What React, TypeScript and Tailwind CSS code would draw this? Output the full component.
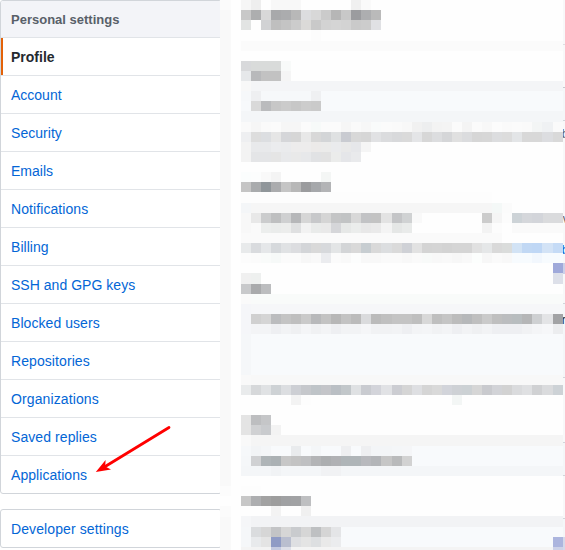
import React from "react";

const links = [
  { label: "Account", tracking: "" },
  { label: "Security", tracking: "tracking-[0.04px]" },
  { label: "Emails", tracking: "" },
  { label: "Notifications", tracking: "tracking-[0.08px]" },
  { label: "Billing", tracking: "tracking-[0.04px]" },
  { label: "SSH and GPG keys", tracking: "tracking-[0.03px]" },
  { label: "Blocked users", tracking: "tracking-[0.06px]" },
  { label: "Repositories", tracking: "tracking-[0.08px]" },
  { label: "Organizations", tracking: "tracking-[0.11px]" },
  { label: "Saved replies", tracking: "tracking-[0.08px]" },
  { label: "Applications", tracking: "tracking-[0.05px]" },
];

// Each row is a run list of 32 cells: a colour (two digits for a grey), with
// an optional *count. The last run extends to the end of the row.
const rows: string[] = [
  "f6 ee fe f8*3 fe*5 f0 fa fe",
  "c8 adaeaf d8 a8a9ab abacae b8 dcdddf d8 cb b6 c8 9b9c9f adaeb0 ba fe",
  "e2e4e3 fe d1d2d4 bf c4 cc dbdad8 c9 d3 d5 d3 ca cc e0e1e4 fe",
  "fe*7 fc fe",
  "fb",
  "fe",
  "d8d9db d9dbda*3 f8faf9 fe",
  "e6e8ea b8b9bb c2*2 f5 fe",
  "f8 f4f5f7",
  "f6f8fa eeeff1 f6f8fa*5 eff0f2 f8fafc",
  "f7f9fb d9 babbbd c7 cb c7 cc ca f8fafc",
  "f4f6f8",
  "fa f6 fa fb f6 f6 fb f7faf9 fb fb f6 fa f7 f9fbfb fb fa f8 f1 edeeef f3 f4 fb f4 fb f8 fc fa fb fa f3f5f5 eff1f3 fa",
  "eeeff1 dd dcdee1 e6 d5d6d9 d6 e8 d8 d3d5d7 dfe1e2 c9cbd1 d8 d6 e1e2e4 dbdcde d8d9db da e4e5e7 d7 dcdddf d5d6d8 e0 dbdcde d6 d7 dcdddf dc e3e5e7 d8 d8 dcdde0 d9",
  "f3 e8e9eb*2 ebecee eaebed edecec*2 eceae9 ebebea eaebed e9 e6e7ea f5 fe",
  "f3 e4e5e7*2 e5 e8e9eb e9 e7e8ea e1e2e4 e2 ebeceb e5e6e9 e9eaec fe",
  "fe",
  "fbfdfd fcfdfd f9 f4 fe*4 f4f6f5 fe",
  "c5 a9abad 90969a abacae c5 b8 9b9c9e a6a8ab b3b4b6 fe",
  "fd*25 fe",
  "f4f6f8 f6*24 f4f8f7 fb fe",
  "f8 e8 cbcccd bebfc0 cfd0d1 b6b7b9 d6 c7c8ca d5 c4c5c6 c1c3c4 d8 c2c3c5 c3 e3 c4c5c7 d0d2d3 f9 fe*6 cc f5 fc cdd3d7 d5d7db d3d5da dadbdd*2",
  "f8 fa eceeed eaeceb ecedec dfe0e1 f2 e9ebea e9 d5d6d9 e6e8e7 ebedec e8 ea f4 e5e7e6 e9ebea fe*7 f3 fc fe fa",
  "fa*26 fe",
  "e8eaeb d9dbde e5e7e9 d6d9dc e0e2e4 dcdde0 d3d5d8 d9 d7d9dc e3e5e6 d3d5d7 d9 c7cdd1 d9 dcdee0 da cfd1d6 e2 d4 d5 d3 d5 d5 e1 e5e7e8 d9 dadcdb d2e3f5 c1d8f4 bfd7f5 d3e3f6 c5dbf6",
  "fc fb f9fbfa f6f9f8 fb fb f7 f9 ebecef fb f9 fcfdfd f8 f8 fa fa f8 fa f8faf9 f8 f9 f7 f9 fcfefd f7 fa f8 f7fbfe*2 f2f7fd f7fbfe",
  "fe*31 9fa9da",
  "f0 eef0ef fe*29 dde0e9",
  "c8c9cb a9aaac bcbdbf fe",
  "fa f9fbfa",
  "f5f6f9 f6f7f9",
  "f5f6f9 d0 d5 bbbcbe c4 bf ca b8b9bb c3 b7 c3 bb dadbdd bb c0 c4 c4 bf d8 bf c5 bc b6b8ba bf ca bf bbbdbf b8bdbf b5b6b7 ced0d2 e3e4e6 a2a3a5",
  "f5f6f9 f3f4f6*2 eeeff2 f2f3f5 eff0f2 f4f5f7 f0f1f3 f3f4f6 eeeff2 f2f3f5*2 f5f6f8 f1f2f4*2 f2f3f5 eeeff2 f3f4f6 f4f5f7 f1f2f4 f3f4f6 eeeff2 f2f3f5 eff0f2 f2f3f5 eeeff2*3 f1f2f4 f4f5f7 f6f7f9 ecedef",
  "f5f7f9 f8fafc",
  "f5f7f9 f8fafc",
  "f5f7f9 f8fafc",
  "f5f7f9 f8fafc",
  "f9 f8",
  "e9ebec d6d8da e0e2e4 ced2d5 dcdee1 cdcfd4 c6c8cc bfc4c8 c4c5c9 babfc4 c2c7ca dfe1e3 c9cbd0 d3d4da e1e2e5 cccdd2 d5 dedfe2 d5 d9 d2d4da ced1d5 ccd1d4 d6 c9cace d2d3d7 d2 dadbdd dfe0e2 d0d1d3 dadbdd cdd2d6",
  "fe*5 f3 fd fe*14 f3f6f5 fe",
  "fe",
  "e4 bdbec0 c5c6c8 fe",
  "e4 d0d1d3 c9cbce f3 fe",
  "f9 f5",
  "f6f8fa f2f4f6 f4f6f8 f8fafc*2 e9ebed f8fafc f4f6f8 f8fafc*2 eeeff1 f8fafc eeeff1 f3f5f7*2 f4f6f8 f5f6f8 f8fafc",
  "f5f7f9 d0d1d3 afb5b8 abb1b4 c7 c3 bfc0c2 b3b4b6 acaeb0 b0b1b4 afb5b8*2 b8b9bd b3b5b8 c6 b9babb d2 f8fafc",
  "f4f6f8*3 f1f3f5 f4f6f8*4 f1f2f4*2 f4f6f8",
  "fe",
  "fd*2 fe",
  "c7 adaeb0 a2 9d a0a1a3 a1a2a4 bebfc1 fe",
  "fe*3 f3 fe*2 f0 fe",
  "f5f6f8 f2f3f5",
  "f5f7f9 dadcde d6 c3c4c6 d6 c9cbce d6 bec0c2 d5 e4e5e7 f8fafc",
  "f5f7f9 e8eaec e4 8f9bc5 b9becf dedfe2 e4 dddfe1 e9 ebecee f8fafc*21 acb5de",
  "f4 f3*2 c4cae0 dddfe8 f4*26 cdd2e8",
];

function runsOf(row: string) {
  let left = 32;
  const parts = row.split(" ");
  return parts.map((part, i) => {
    const [hex, n] = part.split("*");
    const count = i === parts.length - 1 ? left : Number(n || 1);
    left -= count;
    return { color: "#" + (hex.length === 2 ? hex.repeat(3) : hex), count };
  });
}

function Mosaic() {
  return (
    <div className="flex h-[557.4px] w-[322.2px] shrink-0 flex-col">
      {rows.map((row, y) => (
        <div key={y} className="flex h-[10.135px] shrink-0">
          {runsOf(row).map((run, x) => (
            <div
              key={x}
              className="shrink-0"
              style={{ width: `${run.count * 3.125}%`, backgroundColor: run.color }}
            />
          ))}
        </div>
      ))}
    </div>
  );
}

// The sliver of page that stays sharp to the right of the mosaic.
function Edge() {
  return (
    <div className="flex h-[550px] min-w-0 flex-1 flex-col overflow-hidden bg-[#f8f8f9] text-[12px] leading-[14px] text-[#586069]">
      <div className="h-[45px] shrink-0 border-b border-[#dddfe1]" />
      <div className="h-[43px] shrink-0 border-b border-[#c5c9ce]" />
      <div className="h-[33px] shrink-0 border-b border-[#d1d5da] bg-[#f4f6f8]" />
      <div className="h-[91px] shrink-0 pt-[6px] -indent-px">b</div>
      <div className="h-[31px] shrink-0">v</div>
      <div className="h-[20px] shrink-0 -indent-px text-[#0366d6]">b</div>
      <div className="h-[11px] shrink-0 bg-[#ccd0e8]" />
      <div className="h-[30px] shrink-0 border-b border-[#d1d5da]" />
      <div className="h-[74px] shrink-0 border-b border-[#d1d5da] bg-[#f4f6f8] pt-[9px] -indent-px text-[#24292e]">r</div>
      <div className="h-[65px] shrink-0 border-b border-[#d1d5da]" />
      <div className="h-[33px] shrink-0 border-b border-[#d1d5da] bg-[#f4f6f8]" />
      <div className="h-[43px] shrink-0 border-b border-[#d1d5da]" />
      <div className="h-[18px] shrink-0 bg-[#f4f6f8]" />
      <div className="h-[13px] shrink-0 bg-[#d5d8e9]" />
    </div>
  );
}

export default function App() {
  return (
    <div className="relative flex h-[550px] w-[565px] overflow-hidden bg-[#fefefe] font-['Liberation_Sans',Arial,sans-serif]">
      <div className="h-[550px] w-[220px] shrink-0 overflow-hidden bg-white text-[14px] leading-[21px]">
        <nav className="w-[222px] overflow-hidden rounded-[3px] border border-[#d1d5da]">
          <h3 className="h-[37px] border-b border-[#e1e4e8] bg-[#f3f4f8] px-[10px] pt-[9px] text-[13px] leading-[20px] font-bold text-[#586069]">
            Personal settings
          </h3>
          <a className="flex h-[38px] border-b border-[#e1e4e8] font-bold text-[#24292e]">
            <span className="-ml-px h-[37px] w-[3px] bg-[#e36209]" />
            <span className="pt-[9px] pl-[8px]">Profile</span>
          </a>
          {links.map(({ label, tracking }) => (
            <a
              key={label}
              className={`block h-[38px] border-b border-[#e1e4e8] px-[10px] pt-[9px] text-[#0366d6] last:h-[37px] last:border-b-0 ${tracking}`}
            >
              {label}
            </a>
          ))}
        </nav>
        <nav className="mt-[15px] h-[39px] w-[222px] rounded-[3px] border border-[#d1d5da] px-[10px] pt-[9px] tracking-[0.1px] text-[#0366d6]">
          Developer settings
        </nav>
      </div>
      <div className="flex w-[11px] shrink-0 flex-col bg-[#f9f9f9]">
        <div className="h-[10px] bg-[#fbfbfb]" />
        <div className="mt-[476px] h-[10px] bg-[#fcfcfc]" />
        <div className="h-[10px] bg-[#fefefe]" />
        <div className="h-[11px] bg-[#fbfbfb]" />
      </div>
      <div className="w-[9.6px] shrink-0" />
      <Mosaic />
      <Edge />
      <svg className="absolute top-[420px] left-[90px]" width="84" height="58" viewBox="0 0 84 58">
        <path d="M79 7.5L16 46" stroke="#ff0000" strokeWidth="2.8" strokeLinecap="round" />
        <path d="M5.8 52L15.6 40L15.2 46.5L21 49.4Z" fill="#ff0000" />
      </svg>
    </div>
  );
}
